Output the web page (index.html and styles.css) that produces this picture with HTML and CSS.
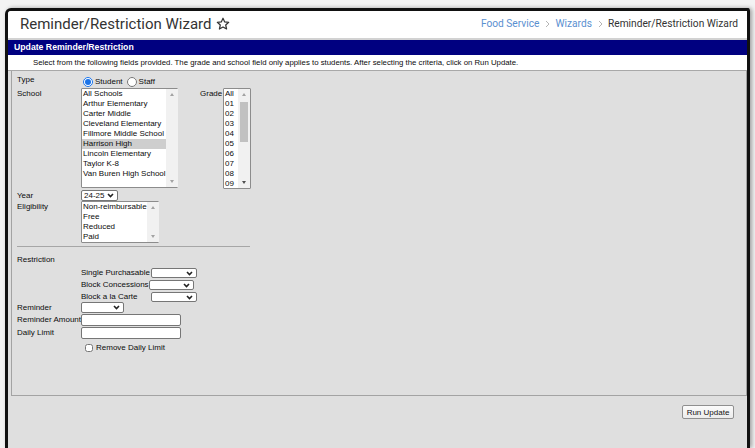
FILE: index.html
```html
<!DOCTYPE html>
<html lang="en">
<head>
<meta charset="utf-8">
<title>Reminder/Restriction Wizard</title>
<link rel="stylesheet" href="styles.css">
</head>
<body>
<div class="window">
  <header class="page-head">
    <h1 class="page-title">Reminder/Restriction Wizard
      <svg class="star" viewBox="0 0 14 14" aria-hidden="true"><path d="M7 1.2 8.7 4.9 12.7 5.3 9.7 8 10.6 12 7 9.9 3.4 12 4.3 8 1.3 5.3 5.3 4.9Z"/></svg>
    </h1>
    <nav class="crumbs">
      <a href="#">Food Service</a>
      <svg class="crumb-sep" viewBox="0 0 5 8" aria-hidden="true"><path d="M1 1 4 4 1 7"/></svg>
      <a href="#">Wizards</a>
      <svg class="crumb-sep" viewBox="0 0 5 8" aria-hidden="true"><path d="M1 1 4 4 1 7"/></svg>
      <span class="crumb-current">Reminder/Restriction Wizard</span>
    </nav>
  </header>

  <section class="panel">
    <div class="panel-title">Update Reminder/Restriction</div>
    <p class="panel-help">Select from the following fields provided. The grade and school field only applies to students. After selecting the criteria, click on Run Update.</p>

    <div class="panel-body">
      <fieldset class="criteria">
        <div class="row row-type">
          <span class="row-label">Type</span>
          <label class="choice"><input type="radio" name="type" checked>Student</label>
          <label class="choice"><input type="radio" name="type">Staff</label>
        </div>

        <div class="row row-school">
          <span class="row-label">School</span>
          <div class="listbox listbox-school">
            <ul class="options">
              <li>All Schools</li>
              <li>Arthur Elementary</li>
              <li>Carter Middle</li>
              <li>Cleveland Elementary</li>
              <li>Fillmore Middle School</li>
              <li class="selected">Harrison High</li>
              <li>Lincoln Elementary</li>
              <li>Taylor K-8</li>
              <li>Van Buren High School</li>
            </ul>
            <div class="scroll">
              <span class="arrow up"></span>
              <span class="track"></span>
              <span class="arrow down"></span>
            </div>
          </div>
          <span class="grade-label">Grade</span>
          <div class="listbox listbox-grade">
            <ul class="options">
              <li>All</li><li>01</li><li>02</li><li>03</li><li>04</li>
              <li>05</li><li>06</li><li>07</li><li>08</li><li>09</li>
            </ul>
            <div class="scroll">
              <span class="arrow up"></span>
              <span class="track"><span class="thumb"></span></span>
              <span class="arrow down dark"></span>
            </div>
          </div>
        </div>

        <div class="row row-year">
          <span class="row-label">Year</span>
          <span class="dd dd-year"><select class="dd-input"><option>24-25</option></select><svg class="dd-caret" viewBox="0 0 7 5" aria-hidden="true"><path d="M1 1 3.5 3.5 6 1"/></svg></span>
        </div>

        <div class="row row-elig">
          <span class="row-label">Eligibility</span>
          <div class="listbox listbox-elig">
            <ul class="options">
              <li>Non-reimbursable</li>
              <li>Free</li>
              <li>Reduced</li>
              <li>Paid</li>
            </ul>
            <div class="scroll">
              <span class="arrow up"></span>
              <span class="track"></span>
              <span class="arrow down"></span>
            </div>
          </div>
        </div>

        <hr class="divider">

        <div class="row row-restriction">
          <span class="row-label">Restriction</span>
        </div>

        <div class="sub-grid">
          <span class="sub-label">Single Purchasable</span>
          <span class="dd dd-wide"><select class="dd-input"><option></option></select><svg class="dd-caret" viewBox="0 0 7 5" aria-hidden="true"><path d="M1 1 3.5 3.5 6 1"/></svg></span>
          <span class="sub-label">Block Concessions</span>
          <span class="dd dd-wide dd-shift"><select class="dd-input"><option></option></select><svg class="dd-caret" viewBox="0 0 7 5" aria-hidden="true"><path d="M1 1 3.5 3.5 6 1"/></svg></span>
          <span class="sub-label">Block a la Carte</span>
          <span class="dd dd-wide"><select class="dd-input"><option></option></select><svg class="dd-caret" viewBox="0 0 7 5" aria-hidden="true"><path d="M1 1 3.5 3.5 6 1"/></svg></span>
        </div>

        <div class="row row-field row-reminder">
          <span class="row-label">Reminder</span>
          <span class="dd dd-reminder"><select class="dd-input"><option></option></select><svg class="dd-caret" viewBox="0 0 7 5" aria-hidden="true"><path d="M1 1 3.5 3.5 6 1"/></svg></span>
        </div>
        <div class="row row-field">
          <span class="row-label">Reminder Amount</span>
          <input class="text-input" type="text">
        </div>
        <div class="row row-field">
          <span class="row-label">Daily Limit</span>
          <input class="text-input" type="text">
        </div>
        <div class="row row-check">
          <label class="check"><input type="checkbox">Remove Daily Limit</label>
        </div>
      </fieldset>

      <div class="actions">
        <button class="btn" type="button">Run Update</button>
      </div>
    </div>
  </section>
</div>
</body>
</html>
```

FILE: styles.css
```css
* { box-sizing: border-box; }

html, body { height: 100%; }

body {
  margin: 0;
  background: #f3f3f3;
  font-family: "Liberation Sans", Arial, sans-serif;
  color: #0c0c0c;
  overflow: hidden;
}

/* outer application frame */
.window {
  margin: 8px 5px 0 5px;
  height: calc(100vh - 8px);
  border: 3px solid #111;
  border-bottom: 0;
  border-top-left-radius: 6px;
  border-top-right-radius: 3px;
  box-shadow: 2px 0 4px rgba(0, 0, 0, 0.35);
  background: #dfdfdf;
  display: flex;
  flex-direction: column;
  overflow: hidden;
}

/* page header with title and breadcrumbs */
.page-head {
  display: flex;
  align-items: center;
  justify-content: space-between;
  height: 29px;
  padding: 0 9px 2px 12px;
  background: #fff;
  border-bottom: 2px solid #d2d2d2;
}

.page-title {
  margin: 0;
  font-family: Roboto, "Liberation Sans", sans-serif;
  font-weight: 400;
  font-size: 15px;
  color: #333;
  display: flex;
  align-items: center;
  gap: 5px;
}

.star {
  width: 14px;
  height: 14px;
  fill: none;
  stroke: #333;
  stroke-width: 1.2;
  stroke-linejoin: round;
}

.crumbs {
  display: flex;
  align-items: center;
  font-family: Roboto, "Liberation Sans", sans-serif;
  font-size: 10.2px;
}

.crumbs a {
  color: #5a8fd0;
  text-decoration: none;
}

.crumb-sep {
  width: 5px;
  height: 8px;
  margin: 0 5px 0 6px;
  fill: none;
  stroke: #b5b5b5;
  stroke-width: 1;
}

.crumb-current { color: #333; }

/* wizard panel */
.panel {
  flex: 1;
  display: flex;
  flex-direction: column;
}

.panel-title {
  height: 15px;
  background: #000080;
  color: #fff;
  font-weight: 700;
  font-size: 8.7px;
  line-height: 15px;
  padding-left: 6px;
}

.panel-help {
  margin: 0;
  height: 16px;
  background: #fff;
  font-size: 7.8px;
  line-height: 15px;
  padding-left: 25px;
  white-space: nowrap;
  border-bottom: 1px solid #a8a8a8;
}

.panel-body {
  flex: 1;
  background: #dfdfdf;
  padding-left: 3px;
}

.criteria {
  margin: 0;
  padding: 0 0 42px 5px;
  border: 1px solid #a3a3a3;
  border-top: 0;
  font-size: 8px;
  line-height: 10px;
}

.row {
  display: flex;
  align-items: flex-start;
}

.row-label {
  width: 64px;
  flex: none;
  white-space: nowrap;
}

/* Type radios */
.row-type {
  padding-top: 4px;
  height: 17px;
}

.choice {
  display: inline-flex;
  align-items: center;
  margin-top: 2px;
  margin-right: 2px;
}

.choice input {
  width: 10px;
  height: 10px;
  margin: 0 2px 0 2px;
  accent-color: #1a73e8;
}

/* list boxes */
.listbox {
  display: flex;
  background: #fff;
  border: 1px solid #8c8c8c;
  border-radius: 1px;
}

.options {
  list-style: none;
  margin: 0;
  padding: 0;
  flex: 1;
}

.options li {
  padding-left: 1px;
  height: 10px;
  line-height: 10px;
  white-space: nowrap;
}

.options li.selected { background: #cecece; }

.scroll {
  width: 12px;
  flex: none;
  display: flex;
  flex-direction: column;
  background: #f1f1f1;
  align-items: center;
}

.track {
  flex: 1;
  width: 100%;
  display: flex;
  justify-content: center;
}

.thumb {
  width: 8px;
  height: 40px;
  margin-top: 2px;
  background: #c1c1c1;
}

.arrow {
  width: 0;
  height: 0;
  margin: 4px 0;
  border-left: 2.5px solid transparent;
  border-right: 2.5px solid transparent;
}

.arrow.up { border-bottom: 3px solid #a3a3a3; }
.arrow.down { border-top: 3px solid #a3a3a3; }
.arrow.down.dark { border-top-color: #505050; }

.row-school { height: 101px; }
.row-school .row-label { padding-top: 1px; }

.listbox-school {
  width: 97px;
  height: 100px;
}

.grade-label {
  margin-left: 22px;
  width: 23px;
  padding-top: 1px;
}

.listbox-grade {
  width: 28px;
  height: 101px;
}

.listbox-grade .options { overflow: hidden; }

.row-year {
  margin-top: 1px;
  height: 11px;
  align-items: center;
}

.row-elig { margin-top: 0; }
.row-elig .row-label { padding-top: 1px; }

.listbox-elig {
  width: 78px;
  height: 42px;
}

.divider {
  margin: 3px 0 0 0;
  width: 233px;
  height: 0;
  border: 0;
  border-top: 1px solid #a6a6a6;
}

.row-restriction {
  margin-top: 8px;
  height: 11px;
}

/* dropdowns */
.dd {
  position: relative;
  display: inline-block;
  height: 10px;
  flex: none;
}

.dd-input {
  appearance: none;
  -webkit-appearance: none;
  display: block;
  width: 100%;
  height: 100%;
  margin: 0;
  padding: 0 0 0 2px;
  border: 1px solid #767676;
  border-radius: 2px;
  background: #fff;
  font: 8px/8px "Liberation Sans", Arial, sans-serif;
  color: #111;
}

.dd-caret {
  position: absolute;
  right: 4px;
  top: 3px;
  width: 7px;
  height: 5px;
  fill: none;
  stroke: #222;
  stroke-width: 1.6;
}

.dd-year { width: 37px; height: 11px; }
.dd-wide { width: 46px; }
.dd-shift { margin-left: -2px; width: 45px; }
.dd-reminder { width: 43px; height: 11px; }

.sub-grid {
  display: grid;
  grid-template-columns: 70px auto;
  row-gap: 2px;
  align-items: center;
  padding-left: 64px;
  margin-top: 2px;
}

.sub-label { line-height: 10px; white-space: nowrap; }

.row-field {
  align-items: center;
  margin-top: 1px;
}

.row-reminder { margin-top: 0; }

.text-input {
  width: 100px;
  height: 12px;
  margin: 0;
  padding: 0 2px;
  border: 1px solid #767676;
  border-radius: 2px;
  background: #fff;
  font: 8px "Liberation Sans", Arial, sans-serif;
}

.row-check {
  padding-left: 68px;
  margin-top: 4px;
}

.check {
  display: inline-flex;
  align-items: center;
}

.check input {
  width: 8px;
  height: 8px;
  margin: 0 3px 0 0;
}

/* footer button */
.actions {
  display: flex;
  justify-content: flex-end;
  padding: 9px 13px 0 0;
}

.btn {
  height: 14px;
  width: 52px;
  padding: 0;
  border: 1px solid #8f8f8f;
  border-radius: 2px;
  background: linear-gradient(#fbfbfb, #ececec);
  font: 8px "Liberation Sans", Arial, sans-serif;
  color: #111;
}
```
